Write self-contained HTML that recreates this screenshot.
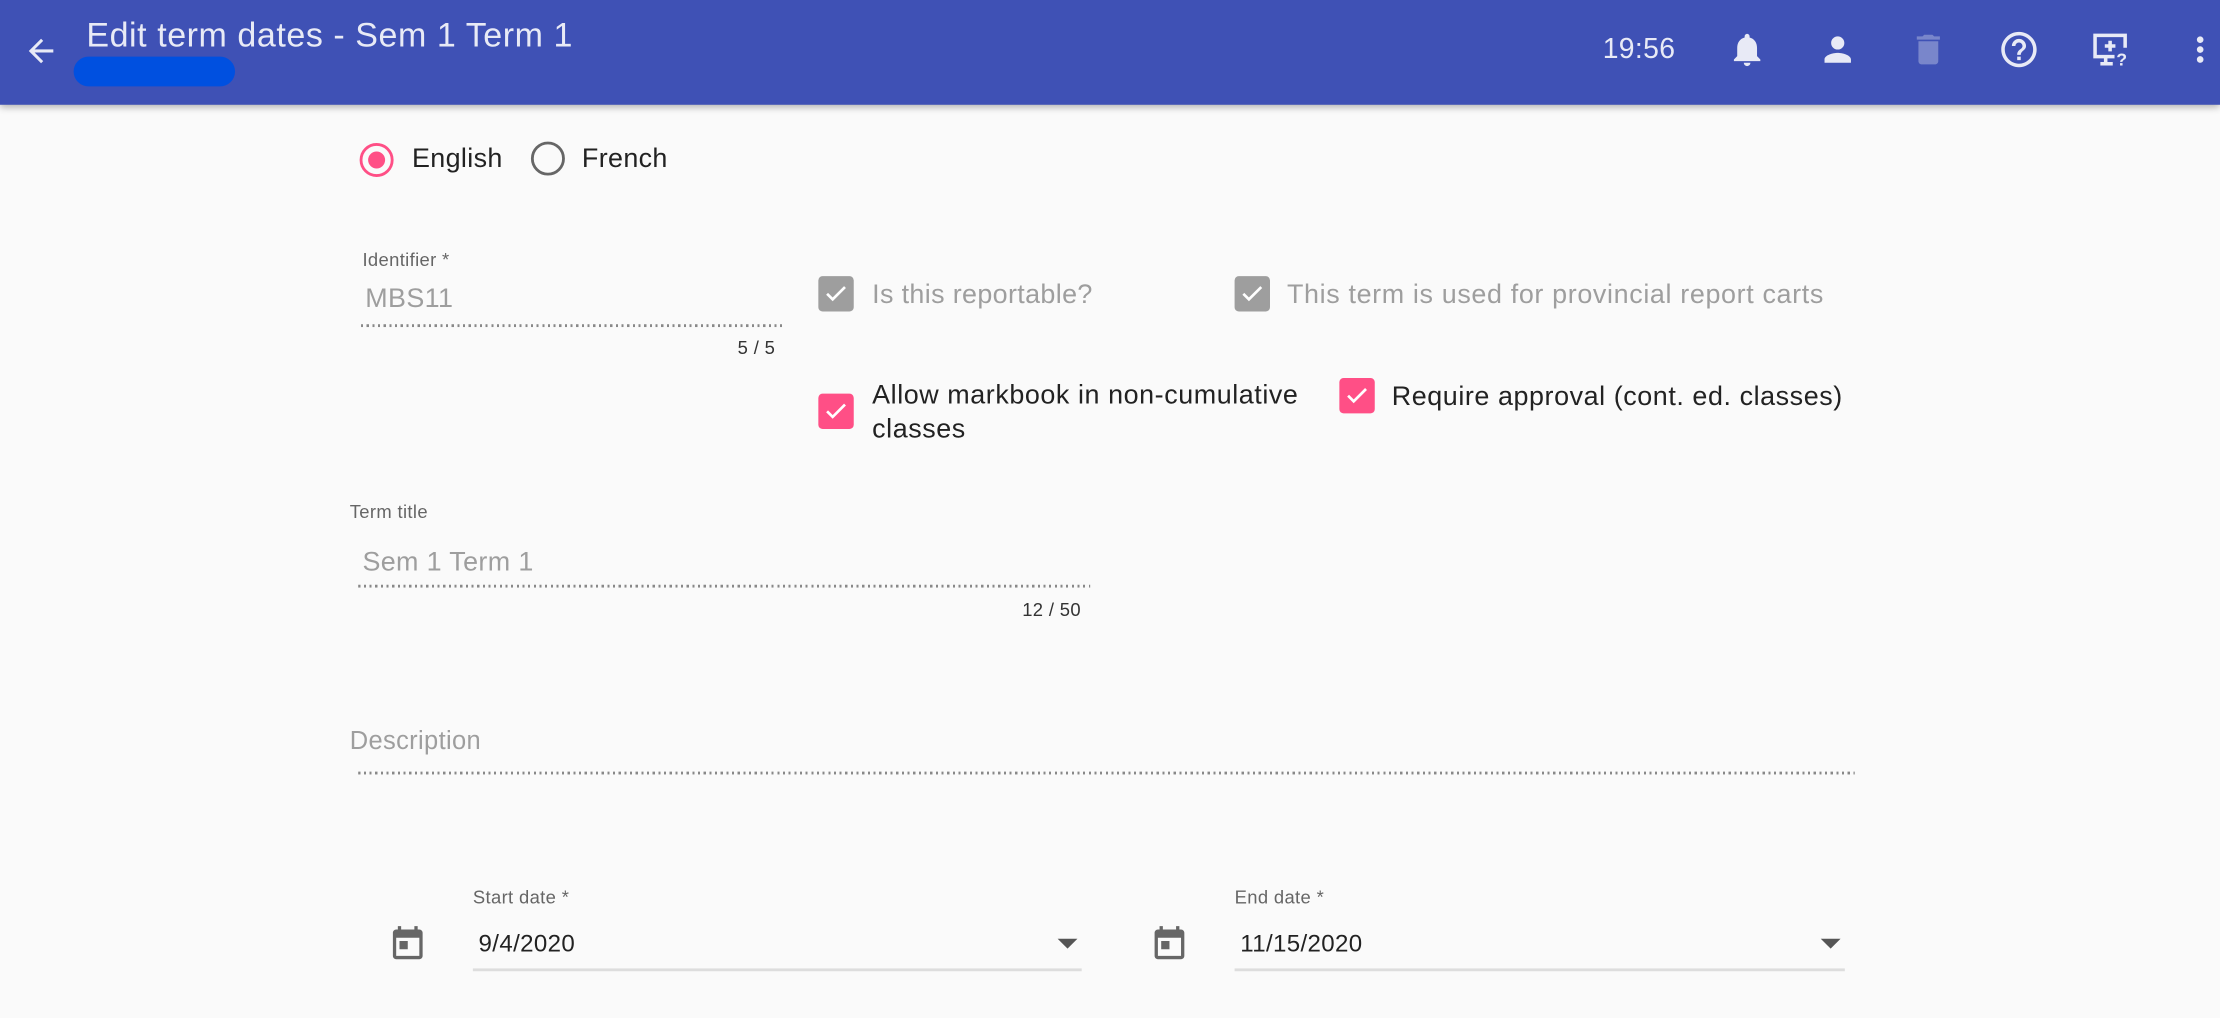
<!DOCTYPE html>
<html><head><meta charset="utf-8"><style>
html,body{margin:0;padding:0;width:2220px;height:1018px;overflow:hidden;background:#fafafa;font-family:"Liberation Sans",sans-serif}
#s{position:absolute;left:0;top:0;width:1568px;height:719px;transform:scale(1.41582);transform-origin:0 0}
.a{position:absolute;letter-spacing:0.25px}
.hdr{left:0;top:0;width:1568px;height:74px;background:#3f51b5;box-shadow:0 2px 5px rgba(0,0,0,.3)}
.t{color:#e8eaf6;white-space:nowrap}
.lbl{font-size:13px;color:#666}
.g{color:#9e9e9e}
.dot{height:1.5px;background:repeating-linear-gradient(90deg,#888 0 1.5px,transparent 1.5px 4px)}
.cb{width:25px;height:25px;border-radius:3px}
.cb svg{position:absolute;left:3px;top:3px}
</style></head><body><div id="s">
<div class="a hdr"></div>
<svg class="a" style="left:16px;top:23px" width="26" height="26" viewBox="0 0 24 24"><path d="M20 11H7.8l5.6-5.6L12 4l-8 8 8 8 1.4-1.4L7.8 13H20z" fill="#e8eaf6"/></svg>
<div class="a t" style="left:61px;top:12px;font-size:24px;letter-spacing:0.4px">Edit term dates - Sem 1 Term 1</div>
<div class="a" style="left:52px;top:40px;width:114px;height:21px;background:#0050e0;border-radius:11px"></div>
<div class="a t" style="left:1132px;top:24px;font-size:20px">19:56</div>
<svg class="a" style="left:1220px;top:21px" width="28" height="28" viewBox="0 0 24 24"><path d="M12 22c1.1 0 2-.9 2-2h-4c0 1.1.9 2 2 2zm6-6v-5c0-3.1-1.6-5.6-4.5-6.3V4c0-.8-.7-1.5-1.5-1.5s-1.5.7-1.5 1.5v.7C7.6 5.4 6 7.9 6 11v5l-2 2v1h16v-1l-2-2z" fill="#e8eaf6"/></svg>
<svg class="a" style="left:1284px;top:21px" width="28" height="28" viewBox="0 0 24 24"><path d="M12 12c2.2 0 4-1.8 4-4s-1.8-4-4-4-4 1.8-4 4 1.8 4 4 4zm0 2c-2.7 0-8 1.3-8 4v2h16v-2c0-2.7-5.3-4-8-4z" fill="#e8eaf6"/></svg>
<svg class="a" style="left:1348px;top:21px" width="28" height="28" viewBox="0 0 24 24"><path d="M6 19c0 1.1.9 2 2 2h8c1.1 0 2-.9 2-2V7H6v12zM19 4h-3.5l-1-1h-5l-1 1H5v2h14V4z" fill="#7986cb"/></svg>
<svg class="a" style="left:1411px;top:20px" width="30" height="30" viewBox="0 0 24 24"><path d="M11 18h2v-2h-2v2zm1-16C6.5 2 2 6.5 2 12s4.5 10 10 10 10-4.5 10-10S17.5 2 12 2zm0 18c-4.4 0-8-3.6-8-8s3.6-8 8-8 8 3.6 8 8-3.6 8-8 8zm0-14c-2.2 0-4 1.8-4 4h2c0-1.1.9-2 2-2s2 .9 2 2c0 2-3 1.8-3 5h2c0-2.3 3-2.5 3-5 0-2.2-1.8-4-4-4z" fill="#e8eaf6"/></svg>
<svg class="a" style="left:1476px;top:20px" width="30" height="30" viewBox="0 0 24 24" fill="none" stroke="#e8eaf6" stroke-width="2"><path d="M14 16H3V4h17v7"/><path d="M9 16v3M6 20h7M11.5 7v6M8.5 10h6"/><text x="15" y="21" font-size="10" fill="#e8eaf6" stroke="none" font-family="Liberation Sans" font-weight="bold">?</text></svg>
<svg class="a" style="left:1540px;top:21px" width="28" height="28" viewBox="0 0 24 24"><path d="M12 8c1.1 0 2-.9 2-2s-.9-2-2-2-2 .9-2 2 .9 2 2 2zm0 2c-1.1 0-2 .9-2 2s.9 2 2 2 2-.9 2-2-.9-2-2-2zm0 6c-1.1 0-2 .9-2 2s.9 2 2 2 2-.9 2-2-.9-2-2-2z" fill="#e8eaf6"/></svg>

<div class="a" style="left:254px;top:101px;width:24px;height:24px;border:2px solid #ff4f86;border-radius:50%;box-sizing:border-box"></div>
<div class="a" style="left:260px;top:107px;width:12px;height:12px;background:#ff4f86;border-radius:50%"></div>
<div class="a" style="left:291px;top:102px;font-size:19px;color:#222">English</div>
<div class="a" style="left:375px;top:100px;width:24px;height:24px;border:2px solid #666;border-radius:50%;box-sizing:border-box"></div>
<div class="a" style="left:411px;top:102px;font-size:19px;color:#222">French</div>

<div class="a lbl" style="left:256px;top:176px">Identifier *</div>
<div class="a g" style="left:258px;top:201px;font-size:19px">MBS11</div>
<div class="a dot" style="left:255px;top:229px;width:300px"></div>
<div class="a" style="left:521px;top:238px;font-size:13px;color:#333">5 / 5</div>

<div class="a cb" style="left:578px;top:195px;background:#9e9e9e"><svg width="19" height="19" viewBox="0 0 24 24"><path d="M4 12l5 5L20 6" stroke="#fff" stroke-width="2.4" fill="none"/></svg></div>
<div class="a g" style="left:616px;top:198px;font-size:19px">Is this reportable?</div>
<div class="a cb" style="left:872px;top:195px;background:#9e9e9e"><svg width="19" height="19" viewBox="0 0 24 24"><path d="M4 12l5 5L20 6" stroke="#fff" stroke-width="2.4" fill="none"/></svg></div>
<div class="a g" style="left:909px;top:198px;font-size:19px;letter-spacing:0.45px">This term is used for provincial report carts</div>

<div class="a cb" style="left:578px;top:278px;background:#ff4f86"><svg width="19" height="19" viewBox="0 0 24 24"><path d="M4 12l5 5L20 6" stroke="#fff" stroke-width="2.4" fill="none"/></svg></div>
<div class="a" style="left:616px;top:268px;font-size:19px;color:#222;line-height:24px;letter-spacing:0.4px">Allow markbook in non-cumulative<br>classes</div>
<div class="a cb" style="left:946px;top:267px;background:#ff4f86"><svg width="19" height="19" viewBox="0 0 24 24"><path d="M4 12l5 5L20 6" stroke="#fff" stroke-width="2.4" fill="none"/></svg></div>
<div class="a" style="left:983px;top:270px;font-size:19px;color:#222;letter-spacing:0.4px">Require approval (cont. ed. classes)</div>

<div class="a lbl" style="left:247px;top:354px">Term title</div>
<div class="a g" style="left:256px;top:387px;font-size:19px">Sem 1 Term 1</div>
<div class="a dot" style="left:253px;top:413px;width:517px"></div>
<div class="a" style="left:722px;top:423px;font-size:13px;color:#333">12 / 50</div>

<div class="a g" style="left:247px;top:513px;font-size:18px">Description</div>
<div class="a dot" style="left:253px;top:545px;width:1057px"></div>

<svg class="a" style="left:274px;top:653px" width="28" height="28" viewBox="0 0 24 24"><path d="M19 3h-1V1h-2v2H8V1H6v2H5c-1.1 0-2 .9-2 2v14c0 1.1.9 2 2 2h14c1.1 0 2-.9 2-2V5c0-1.1-.9-2-2-2zm0 16H5V8h14v11zM7 10h5v5H7z" fill="#666"/></svg>
<div class="a lbl" style="left:334px;top:626px">Start date *</div>
<div class="a" style="left:338px;top:657px;font-size:17px;color:#222">9/4/2020</div>
<div class="a" style="left:747px;top:663px;border-left:7px solid transparent;border-right:7px solid transparent;border-top:7px solid #555"></div>
<div class="a" style="left:334px;top:684px;width:430px;height:2px;background:#ddd"></div>

<svg class="a" style="left:812px;top:653px" width="28" height="28" viewBox="0 0 24 24"><path d="M19 3h-1V1h-2v2H8V1H6v2H5c-1.1 0-2 .9-2 2v14c0 1.1.9 2 2 2h14c1.1 0 2-.9 2-2V5c0-1.1-.9-2-2-2zm0 16H5V8h14v11zM7 10h5v5H7z" fill="#666"/></svg>
<div class="a lbl" style="left:872px;top:626px">End date *</div>
<div class="a" style="left:876px;top:657px;font-size:17px;color:#222">11/15/2020</div>
<div class="a" style="left:1286px;top:663px;border-left:7px solid transparent;border-right:7px solid transparent;border-top:7px solid #555"></div>
<div class="a" style="left:872px;top:684px;width:431px;height:2px;background:#ddd"></div>
</div></body></html>
